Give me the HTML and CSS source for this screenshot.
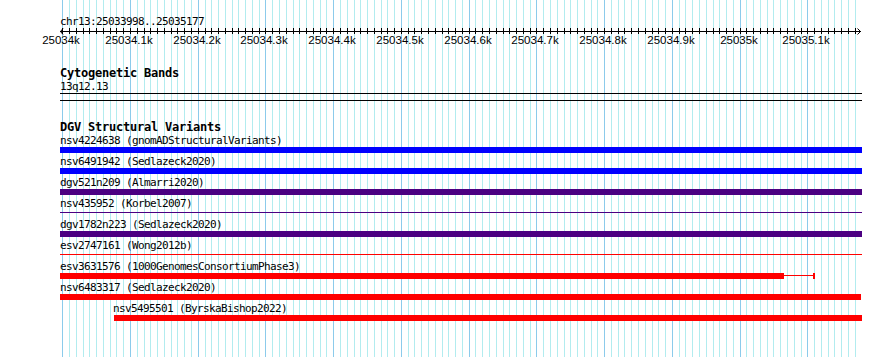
FILE: index.html
```html
<!DOCTYPE html>
<html lang="en">
<head>
    <meta charset="UTF-8">
    <title>chr13:25033998..25035177</title>
    <link rel="stylesheet" href="styles.css">
</head>
<body>

<div class="view">
    <svg class="grid" id="grid" width="890" height="357"></svg>

    <div class="tracks">
        <div class="ruler">
            <div class="locus">chr13:25033998..25035177</div>
            <svg class="scale" id="scale" width="802" height="38"></svg>
        </div>

        <div class="track">
            <div class="track-title">Cytogenetic Bands</div>
            <div class="band-label">13q12.13</div>
            <div class="band"></div>
        </div>

        <div class="track track--sv">
            <div class="track-title">DGV Structural Variants</div>

            <div class="feature">
                <div class="feature-label">nsv4224638 (gnomADStructuralVariants)</div>
                <div class="glyph"><div class="bar bar--blue" style="width: 802px"></div></div>
            </div>
            <div class="feature">
                <div class="feature-label">nsv6491942 (Sedlazeck2020)</div>
                <div class="glyph"><div class="bar bar--blue" style="width: 802px"></div></div>
            </div>
            <div class="feature">
                <div class="feature-label">dgv521n209 (Almarri2020)</div>
                <div class="glyph"><div class="bar bar--indigo" style="width: 802px"></div></div>
            </div>
            <div class="feature">
                <div class="feature-label">nsv435952 (Korbel2007)</div>
                <div class="glyph"><div class="line line--indigo" style="width: 802px"></div></div>
            </div>
            <div class="feature">
                <div class="feature-label">dgv1782n223 (Sedlazeck2020)</div>
                <div class="glyph"><div class="bar bar--indigo" style="width: 802px"></div></div>
            </div>
            <div class="feature">
                <div class="feature-label">esv2747161 (Wong2012b)</div>
                <div class="glyph"><div class="line line--red" style="width: 802px"></div></div>
            </div>
            <div class="feature">
                <div class="feature-label">esv3631576 (1000GenomesConsortiumPhase3)</div>
                <div class="glyph">
                    <div class="bar bar--red" style="width: 724px"></div>
                    <div class="line line--red" style="width: 29px"></div>
                    <div class="cap cap--red"></div>
                </div>
            </div>
            <div class="feature">
                <div class="feature-label">nsv6483317 (Sedlazeck2020)</div>
                <div class="glyph"><div class="bar bar--red" style="width: 801px"></div></div>
            </div>
            <div class="feature">
                <div class="feature-label" style="padding-left: 53px">nsv5495501 (ByrskaBishop2022)</div>
                <div class="glyph"><div class="bar bar--red" style="margin-left: 54px; width: 748px"></div></div>
            </div>
        </div>
    </div>
</div>

<script src="script.js"></script>

</body>
</html>
```

FILE: styles.css
```css
body {
    margin: 0;
    background-color: #fff;
}
.view {
    position: relative;
    width: 890px;
    height: 357px;
    overflow: hidden;
    font-family: "DejaVu Sans Mono", "Liberation Mono", monospace;
    font-size: 11px;
    letter-spacing: -0.62px;
    color: #000;
}
.grid {
    position: absolute;
    left: 0;
    top: 0;
}
.tracks {
    position: relative;
    margin-left: 60px;
    width: 802px;
}
.ruler {
    height: 66px;
}
.locus {
    padding-top: 15px;
    line-height: 13px;
    white-space: nowrap;
}
.scale {
    display: block;
    overflow: visible;
}
.scale text {
    font-family: "Liberation Sans", Arial, sans-serif;
    font-size: 11.5px;
    letter-spacing: 0;
}
.track-title {
    font-weight: bold;
    font-size: 12px;
    letter-spacing: -0.22px;
    line-height: 14px;
    white-space: nowrap;
}
.band-label {
    line-height: 13px;
}
.band {
    height: 6px;
    border-top: 1px solid #000;
    border-bottom: 1px solid #000;
}
.track--sv {
    margin-top: 20px;
}
.track--sv .track-title {
    line-height: 13px;
}
.feature {
    height: 21px;
}
.feature-label {
    line-height: 13px;
    white-space: nowrap;
}
.glyph {
    display: flex;
    align-items: flex-start;
    height: 6px;
}
.bar {
    height: 6px;
    flex-shrink: 0;
}
.line {
    height: 1px;
    margin-top: 2px;
    flex-shrink: 0;
}
.cap {
    width: 2px;
    height: 6px;
    flex-shrink: 0;
}
.bar--blue { background-color: #0000ff; }
.bar--indigo, .line--indigo { background-color: #4b0082; }
.bar--red, .line--red, .cap--red { background-color: #ff0000; }
```

FILE: script.js
```js
var SVG_NS = 'http://www.w3.org/2000/svg';
var VIEW_END = 25035177;
var TRACK_LEFT = 60;

// 25034000 sits at x=62.3, 0.6773 px per base
function bpToX(bp) {
    return 62.3 + (bp - 25034000) * 0.6773;
}

function addEl(parent, name, attrs, text) {
    var el = document.createElementNS(SVG_NS, name);
    for (var key in attrs) {
        el.setAttribute(key, attrs[key]);
    }
    if (text) el.textContent = text;
    parent.appendChild(el);
    return el;
}

var grid = document.getElementById('grid');
var scale = document.getElementById('scale');

for (var bp = 25034000; bp <= VIEW_END; bp += 10) {
    var x = Math.round(bpToX(bp)) + 0.5;
    var major = bp % 100 === 0;
    addEl(grid, 'line', {
        x1: x, y1: 0, x2: x, y2: 357,
        stroke: major ? '#8ccbeb' : '#b2ecef',
        'stroke-width': 1,
        'shape-rendering': 'crispEdges'
    });

    var sx = x - TRACK_LEFT;
    addEl(scale, 'line', {
        x1: sx, y1: 0, x2: sx, y2: 6,
        stroke: '#000', 'stroke-width': 1, 'shape-rendering': 'crispEdges'
    });
    if (major) {
        var kb = (bp / 1000).toString() + 'k';
        addEl(scale, 'text', { x: sx - 1.5, y: 16, 'text-anchor': 'middle' }, kb);
    }
}

// axis with arrows at both ends
addEl(scale, 'line', {
    x1: 0, y1: 3.5, x2: 801, y2: 3.5,
    stroke: '#000', 'stroke-width': 1, 'shape-rendering': 'crispEdges'
});
addEl(scale, 'polyline', { points: '3,0.5 0.5,3.5 3,6.5', fill: 'none', stroke: '#000', 'stroke-width': 1 });
addEl(scale, 'polyline', { points: '797.5,0.5 800.5,3.5 797.5,6.5', fill: 'none', stroke: '#000', 'stroke-width': 1 });
```
